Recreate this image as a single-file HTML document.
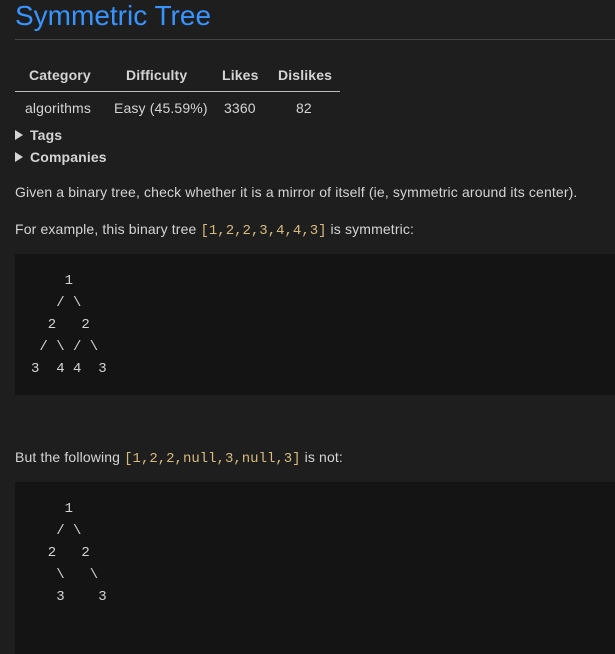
<!DOCTYPE html>
<html><head><meta charset="utf-8"><style>
body{margin:0;background:#1e1e1e;color:#d4d4d4;font-family:"Liberation Sans",sans-serif;font-size:14px;width:615px;height:639px;overflow:hidden;position:relative;letter-spacing:0.14px}
.a{position:absolute;white-space:nowrap}
h1{position:absolute;left:15px;top:0;margin:0;font-weight:normal;font-size:28px;color:#3794ff;line-height:32px;letter-spacing:0}
.hr{position:absolute;left:15px;right:0;top:39px;height:1px;background:#444}
.c{color:#d7ba7d;font-family:"Liberation Mono",monospace;letter-spacing:0}
pre{position:absolute;left:15px;right:0;margin:0;background:#141414;padding:16px;font-family:"Liberation Mono",monospace;font-size:14px;line-height:22px;color:#d4d4d4;letter-spacing:0}
.tri{display:inline-block;width:0;height:0;border-left:8px solid #d4d4d4;border-top:5px solid transparent;border-bottom:5px solid transparent;margin-right:7px}
</style></head><body>
<h1>Symmetric Tree</h1>
<div class="hr"></div>
<div class="a" style="left:29px;top:67px;font-weight:bold">Category</div>
<div class="a" style="left:126px;top:67px;font-weight:bold">Difficulty</div>
<div class="a" style="left:222px;top:67px;font-weight:bold">Likes</div>
<div class="a" style="left:278px;top:67px;font-weight:bold">Dislikes</div>
<div class="a" style="left:15px;top:91px;width:325px;height:1px;background:#bbb"></div>
<div class="a" style="left:25px;top:100px">algorithms</div>
<div class="a" style="left:114px;top:100px">Easy (45.59%)</div>
<div class="a" style="left:224px;top:100px">3360</div>
<div class="a" style="left:296px;top:100px">82</div>
<div class="a" style="left:15px;top:127px;font-weight:bold"><span class="tri"></span>Tags</div>
<div class="a" style="left:15px;top:149px;font-weight:bold"><span class="tri"></span>Companies</div>
<div class="a" style="left:15px;top:184px">Given a binary tree, check whether it is a mirror of itself (ie, symmetric around its center).</div>
<div class="a" style="left:15px;top:221px">For example, this binary tree <span class="c">[1,2,2,3,4,4,3]</span> is symmetric:</div>
<pre style="top:254px;height:109px">    1
   / \
  2   2
 / \ / \
3  4 4  3
</pre>
<div class="a" style="left:15px;top:449px">But the following <span class="c">[1,2,2,null,3,null,3]</span> is not:</div>
<pre style="top:482px;height:140px">    1
   / \
  2   2
   \   \
   3    3
</pre>
</body></html>
